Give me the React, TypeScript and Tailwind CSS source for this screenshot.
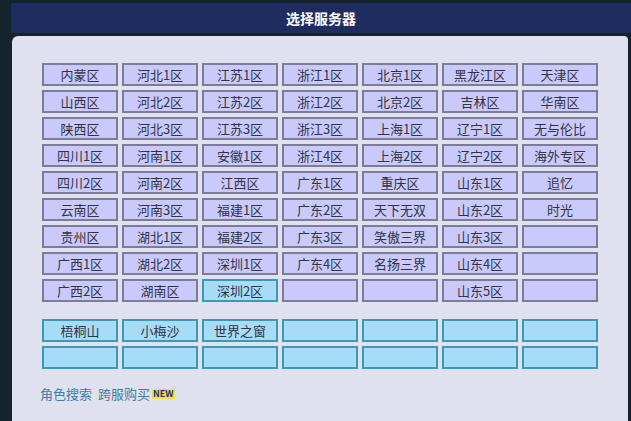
const rows: string[][] = [
  ["内蒙区", "河北1区", "江苏1区", "浙江1区", "北京1区", "黑龙江区", "天津区"],
  ["山西区", "河北2区", "江苏2区", "浙江2区", "北京2区", "吉林区", "华南区"],
  ["陕西区", "河北3区", "江苏3区", "浙江3区", "上海1区", "辽宁1区", "无与伦比"],
  ["四川1区", "河南1区", "安徽1区", "浙江4区", "上海2区", "辽宁2区", "海外专区"],
  ["四川2区", "河南2区", "江西区", "广东1区", "重庆区", "山东1区", "追忆"],
  ["云南区", "河南3区", "福建1区", "广东2区", "天下无双", "山东2区", "时光"],
  ["贵州区", "湖北1区", "福建2区", "广东3区", "笑傲三界", "山东3区", ""],
  ["广西1区", "湖北2区", "深圳1区", "广东4区", "名扬三界", "山东4区", ""],
  ["广西2区", "湖南区", "深圳2区", "", "", "山东5区", ""],
];
const extra = [["梧桐山", "小梅沙", "世界之窗", "", "", "", ""], ["", "", "", "", "", "", ""]];

function Cell({ label, cyan }: { label: string; cyan?: boolean }) {
  return (
    <div
      className={
        "flex h-[23px] w-[76px] items-center justify-center border-2 text-[13px] text-[#333344] " +
        (cyan ? "border-[#3a98b8] bg-[#a6dcf8]" : "border-[#7c7c98] bg-[#c9c9fb]")
      }
    >
      {label}
    </div>
  );
}

export default function App() {
  return (
    <div
      className="flex h-[421px] w-[631px] flex-col bg-[#15242c]"
      style={{ fontFamily: '"Noto Sans CJK SC", sans-serif' }}
    >
      <div className="ml-[11px] mt-[3px] flex h-[30px] items-center justify-center bg-[#1f2c60] text-[14px] font-bold text-white">
        选择服务器
      </div>
      <div className="ml-[12px] mr-[3px] mt-[3px] flex-1 rounded-tl-[6px] rounded-tr-[4px] bg-[#e0e1ee] pl-[30px] pt-[27px]">
        <div className="flex flex-col gap-[4px]">
          {rows.map((r, i) => (
            <div key={i} className="flex gap-[4px]">
              {r.map((c, j) => (
                <Cell key={j} label={c} cyan={c === "深圳2区"} />
              ))}
            </div>
          ))}
        </div>
        <div className="mt-[17px] flex flex-col gap-[4px]">
          {extra.map((r, i) => (
            <div key={i} className="flex gap-[4px]">
              {r.map((c, j) => (
                <Cell key={j} label={c} cyan />
              ))}
            </div>
          ))}
        </div>
        <div className="-ml-[2px] mt-[15px] flex items-center gap-[6px] text-[13px] text-[#3a7fa6]">
          <span>角色搜索</span>
          <span>跨服购买</span>
          <span className="-ml-[4px] bg-[#f4e04a] px-[1px] text-[9px] font-bold leading-[10px] text-[#2a2a80]">NEW</span>
        </div>
      </div>
    </div>
  );
}
